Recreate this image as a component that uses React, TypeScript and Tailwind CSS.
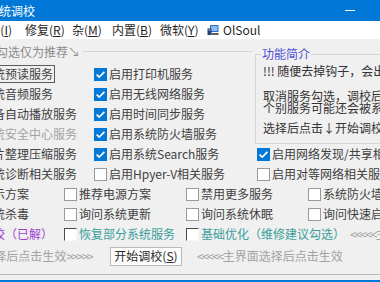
import React from "react";

type St = "on" | "off" | "sunken";

function Check({ state = "off" }: { state?: St }) {
  if (state === "on")
    return (
      <span className="w-[13px] h-[13px] shrink-0 bg-[#0078d7] flex items-center justify-center">
        <svg width="13" height="13" viewBox="0 0 13 13">
          <path d="M2.6 6.6 L5.2 9.1 L10.4 3.9" fill="none" stroke="#ffffff" strokeWidth="1.7" />
        </svg>
      </span>
    );
  if (state === "sunken")
    return <span className="w-[13px] h-[13px] shrink-0 bg-white border border-[#4a4a4a] border-r-[#f7f7f7] border-b-[#f7f7f7]" />;
  return <span className="w-[13px] h-[13px] shrink-0 bg-white border border-[#999999]" />;
}

function Item({
  state = "off",
  children,
  color = "text-[#404040]",
  className = "",
}: {
  state?: St;
  children: React.ReactNode;
  color?: string;
  className?: string;
}) {
  return (
    <div className={`flex items-center shrink-0 whitespace-nowrap ${className}`}>
      <Check state={state} />
      <span className={`ml-[2px] ${color}`}>{children}</span>
    </div>
  );
}

function Row({ children, className = "" }: { children: React.ReactNode; className?: string }) {
  return <div className={`h-[20px] shrink-0 flex items-center ${className}`}>{children}</div>;
}

export default function App() {
  const gray = "text-[#a3a3a3]";
  const teal = "text-[#3a9e9c]";
  return (
    <div className="w-[380px] h-[282px] overflow-hidden bg-[#f0f0f0] flex flex-col font-['Noto_Sans_CJK_SC',sans-serif] text-[12px] leading-[16px] text-[#404040]">
      {/* title bar */}
      <div className="h-[21px] shrink-0 bg-[#0078d7] flex items-center">
        <span className="ml-[-13px] text-white whitespace-nowrap shrink-0">系统调校</span>
        <div className="flex-1" />
        <span className="w-[10px] h-px bg-white mr-[25px] shrink-0" />
      </div>

      {/* menu bar */}
      <div className="h-[18px] shrink-0 bg-white flex items-center whitespace-nowrap text-[#1f1f1f]">
        <div className="w-[25px] shrink-0 flex justify-end pr-[13px]">
          <span className="shrink-0">信息(<u>I</u>)</span>
        </div>
        <div className="w-[47px] shrink-0">修复(<u>R</u>)</div>
        <div className="w-[40px] shrink-0">杂(<u>M</u>)</div>
        <div className="w-[48px] shrink-0">内置(<u>B</u>)</div>
        <div className="w-[47px] shrink-0">微软(<u>Y</u>)</div>
        <svg width="12" height="12" viewBox="0 0 12 12" className="shrink-0">
          <rect x="3" y="1" width="8.5" height="7" fill="#2f6fc9" />
          <rect x="4" y="2" width="6.5" height="5" fill="#8fbcef" />
          <rect x="0.5" y="4.5" width="4" height="6.5" fill="#223f78" />
          <rect x="1.5" y="5.5" width="2" height="1" fill="#9fc4f0" />
          <rect x="4.5" y="9" width="7" height="2" fill="#5a5a5a" />
        </svg>
        <span className="ml-[4px]">OlSoul</span>
      </div>

      {/* top section */}
      <div className="flex shrink-0">
        {/* left + middle */}
        <div className="w-[252px] shrink-0 flex flex-col">
          <div className="h-[25px] flex items-center">
            <span className="ml-[-4px] shrink-0 whitespace-nowrap text-[#8c8c8c]">勾选仅为推荐↘</span>
            <div className="flex-1 h-px bg-[#d3d3d3] ml-[3px]" />
          </div>
          <Row>
            <div className="w-[94px] shrink-0">
              <div className="flex items-center ml-[-58px] whitespace-nowrap">
                <Check state="on" />
                <span className="ml-[1px] px-[1px] outline outline-1 outline-[#5c5c5c]">禁用系统预读服务</span>
              </div>
            </div>
            <Item state="on">启用打印机服务</Item>
          </Row>
          <Row>
            <div className="w-[94px] shrink-0">
              <Item state="on" className="ml-[-58px]">禁用系统音频服务</Item>
            </div>
            <Item state="on">启用无线网络服务</Item>
          </Row>
          <Row>
            <div className="w-[94px] shrink-0">
              <Item state="on" className="ml-[-58px]">禁用设备自动播放服务</Item>
            </div>
            <Item state="on">启用时间同步服务</Item>
          </Row>
          <Row>
            <div className="w-[94px] shrink-0">
              <Item state="off" className="ml-[-58px]" color={gray}>禁用系统安全中心服务</Item>
            </div>
            <Item state="on">启用系统防火墙服务</Item>
          </Row>
          <Row>
            <div className="w-[94px] shrink-0">
              <Item state="on" className="ml-[-58px]">禁用碎片整理压缩服务</Item>
            </div>
            <Item state="on">启用系统Search服务</Item>
          </Row>
          <Row>
            <div className="w-[94px] shrink-0">
              <Item state="on" className="ml-[-58px]">禁用系统诊断相关服务</Item>
            </div>
            <Item state="off">启用Hpyer-V相关服务</Item>
          </Row>
        </div>

        {/* right column */}
        <div className="flex-1 min-w-0 flex flex-col pt-[7px]">
          <fieldset className="ml-[3px] w-[220px] h-[98px] shrink-0 border border-[#d6d6d6] p-0 m-0 min-w-0">
            <legend className="ml-[5px] px-[1px] text-[#4f50d6] leading-[16px]">功能简介</legend>
            <div className="pl-[7px] pt-[1px] whitespace-nowrap text-[#333333]">
              <div className="leading-[16px]">!!! 随便去掉钩子，会出现意想不到的问题</div>
              <div className="mt-[11px] leading-[12px]">
                <div>取消服务勾选，调校后禁用对应服务</div>
                <div>个别服务可能还会被系统自动启动</div>
              </div>
              <div className="mt-[7px] leading-[14px]">选择后点击↓开始调校按钮</div>
            </div>
          </fieldset>
          <Row className="pl-[5px]">
            <Item state="on">启用网络发现/共享相关服务</Item>
          </Row>
          <Row className="pl-[5px]">
            <Item state="off">启用对等网络相关服务</Item>
          </Row>
        </div>
      </div>

      {/* rows 7-9 */}
      <Row>
        <div className="w-[64px] shrink-0">
          <Item state="on" className="ml-[-58px]">默认显示方案</Item>
        </div>
        <div className="w-[122px] shrink-0">
          <Item state="off">推荐电源方案</Item>
        </div>
        <div className="w-[122px] shrink-0">
          <Item state="off">禁用更多服务</Item>
        </div>
        <Item state="off">系统防火墙提示</Item>
      </Row>
      <Row>
        <div className="w-[64px] shrink-0">
          <Item state="on" className="ml-[-58px]">禁用系统杀毒</Item>
        </div>
        <div className="w-[122px] shrink-0">
          <Item state="off">询问系统更新</Item>
        </div>
        <div className="w-[122px] shrink-0">
          <Item state="off">询问系统休眠</Item>
        </div>
        <Item state="off">询问快速启动</Item>
      </Row>
      <Row>
        <div className="w-[64px] shrink-0">
          <Item state="sunken" className="ml-[-58px]" color="text-[#a23fd0]">恢复调校（已解）</Item>
        </div>
        <div className="w-[122px] shrink-0">
          <Item state="sunken" color={teal}>恢复部分系统服务</Item>
        </div>
        <Item state="sunken" color={teal}>基础优化（维修建议勾选）</Item>
        <span className={`ml-[5px] shrink-0 whitespace-nowrap ${gray}`}>
          <span className="tracking-[-1.5px]">&lt;&lt;&lt;&lt;&lt;</span>主界面选择后点击生效
        </span>
      </Row>

      {/* button row */}
      <div className="h-[24px] shrink-0 flex items-center">
        <div className="w-[110px] shrink-0 flex justify-end pr-[18px]">
          <span className={`shrink-0 whitespace-nowrap ${gray}`}>
            主界面选择后点击生效<span className="tracking-[-1.5px]">&gt;&gt;&gt;&gt;&gt;</span>
          </span>
        </div>
        <button className="w-[72px] h-[19px] shrink-0 bg-[#fdfdfd] border border-[#b9b9b9] text-[#2a2a2a] leading-[16px] flex items-center justify-center">
          开始调校(<u>S</u>)
        </button>
        <span className={`ml-[15px] shrink-0 whitespace-nowrap ${gray}`}>
          <span className="tracking-[-1.5px]">&lt;&lt;&lt;&lt;&lt;</span>主界面选择后点击生效
        </span>
      </div>

      <div className="h-[6px] shrink-0" />
      <div className="h-px shrink-0 bg-[#b8b8b8]" />
      <div className="flex-1" />
      <div className="h-[2px] shrink-0 bg-[#0078d7]" />
    </div>
  );
}
